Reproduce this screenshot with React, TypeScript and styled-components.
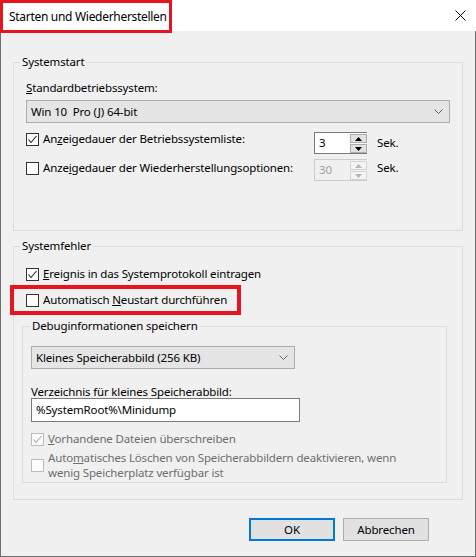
import React from 'react';
import styled, { createGlobalStyle } from 'styled-components';

const GlobalStyle = createGlobalStyle`
  html, body {
    margin: 0;
    padding: 0;
    background: #f0f0f0;
  }
  body {
    font-family: "Noto Sans", "Liberation Sans", sans-serif;
    font-size: 11.5px;
    line-height: 16px;
    letter-spacing: -0.15px;
    color: #000;
  }
  * {
    box-sizing: border-box;
  }
`;

const Window = styled.div`
  width: 476px;
  height: 557px;
  display: flex;
  flex-direction: column;
  background: #f0f0f0;
`;

const TitleBar = styled.div`
  height: 31px;
  flex: 0 0 31px;
  background: #fff;
  display: flex;
  align-items: flex-start;
  justify-content: space-between;
  padding-right: 10px;
  font-size: 12px;
  letter-spacing: -0.3px;
`;

const Highlight = styled.div<{ $width: number; $height: number }>`
  position: relative;
  z-index: 1;
  width: ${(p) => p.$width}px;
  height: ${(p) => p.$height}px;
  border: 3px solid #e5141f;
  display: flex;
  align-items: center;
`;

const TitleText = styled.span`
  padding-left: 6px;
  white-space: nowrap;
`;

const CloseButton = styled.div`
  width: 12px;
  height: 31px;
  display: flex;
  align-items: center;
  justify-content: center;
`;

const Body = styled.div`
  flex: 1;
  border: 1px solid #6e6e6e;
  border-top: none;
  padding: 23px 12px 0 12px;
`;

const Group = styled.fieldset<{ $pt: number; $pb: number; $mt?: number }>`
  margin: ${(p) => p.$mt ?? 0}px 0 0 0;
  min-width: 0;
  border: 1px solid #dcdcdc;
  padding: ${(p) => p.$pt}px 12px ${(p) => p.$pb}px 12px;
`;

const SubGroup = styled(Group)`
  margin: 3px 0 0 -4px;
  width: 425px;
  padding-left: 8px;
  padding-right: 8px;
`;

const Legend = styled.legend<{ $offset: number }>`
  margin-left: ${(p) => p.$offset}px;
  padding: 0 2px;
  line-height: 16px;
`;

const FieldLabel = styled.div`
  white-space: nowrap;
`;

const PathLabel = styled.div`
  margin-top: 16px;
  line-height: 14px;
  white-space: nowrap;
`;

const Combo = styled.div<{ $width?: number; $mt: number }>`
  margin-top: ${(p) => p.$mt}px;
  width: ${(p) => (p.$width ? `${p.$width}px` : '100%')};
  height: 23px;
  background: #e5e5e5;
  border: 1px solid #adadad;
  display: flex;
  align-items: center;
  justify-content: space-between;
  padding: 0 6px 0 4px;
`;

const SpinRow = styled.div<{ $mt: number }>`
  margin-top: ${(p) => p.$mt}px;
  display: flex;
  align-items: flex-start;
  height: 22px;
`;

const SpinLabel = styled.div<{ $shift: number }>`
  flex: 0 0 288px;
  margin-top: ${(p) => p.$shift}px;
`;

const Spin = styled.div<{ $disabled?: boolean }>`
  width: 53px;
  height: 22px;
  display: flex;
  border: 1px solid ${(p) => (p.$disabled ? '#cccccc' : '#7a7a7a')};
  border-right: none;
  background: ${(p) => (p.$disabled ? '#f0f0f0' : '#fff')};
`;

const SpinValue = styled.div<{ $disabled?: boolean }>`
  flex: 1;
  padding-left: 4px;
  line-height: 20px;
  color: ${(p) => (p.$disabled ? '#a0a0a0' : '#000')};
`;

const SpinButtons = styled.div`
  width: 17px;
  display: flex;
  flex-direction: column;
  padding: 1px 0 0 0;
  gap: 1px;
`;

const SpinButton = styled.div<{ $disabled?: boolean }>`
  height: 9px;
  border: 1px solid ${(p) => (p.$disabled ? '#d4d4d4' : '#adadad')};
  background: ${(p) => (p.$disabled ? '#f4f4f4' : '#e1e1e1')};
  display: flex;
  align-items: center;
  justify-content: center;
`;

const Unit = styled.div<{ $shift: number }>`
  margin-left: 10px;
  margin-top: ${(p) => p.$shift}px;
`;

const CheckRow = styled.label<{ $mt?: number; $disabled?: boolean }>`
  margin-top: ${(p) => p.$mt ?? 0}px;
  display: flex;
  align-items: center;
  gap: 4px;
  white-space: nowrap;
  color: ${(p) => (p.$disabled ? '#6d6d6d' : '#000')};
`;

const MultiCheckRow = styled(CheckRow)`
  white-space: normal;
  line-height: 15px;
`;

const Box = styled.span<{ $disabled?: boolean }>`
  flex: 0 0 13px;
  width: 13px;
  height: 13px;
  border: 1px solid ${(p) => (p.$disabled ? '#bcbcbc' : '#333333')};
  background: ${(p) => (p.$disabled ? '#fcfcfc' : '#fff')};
  display: flex;
  align-items: center;
  justify-content: center;
`;

const HighlightRow = styled.div`
  margin: 3px 0 0 -16px;
  width: 231px;
  height: 30px;
  border: 4px solid #e5141f;
  padding-left: 12px;
  display: flex;
  align-items: center;
`;

const PathInput = styled.div`
  margin-top: -1px;
  width: 269px;
  height: 24px;
  background: #fff;
  border: 1px solid #7a7a7a;
  padding-left: 4px;
  line-height: 22px;
`;

const ButtonRow = styled.div`
  margin-top: 18px;
  display: flex;
  justify-content: flex-end;
  gap: 8px;
  padding-right: 34px;
`;

const Button = styled.div<{ $default?: boolean }>`
  width: 86px;
  height: 23px;
  background: #e1e1e1;
  border: ${(p) => (p.$default ? '2px solid #0078d7' : '1px solid #adadad')};
  display: flex;
  align-items: center;
  justify-content: center;
`;

const Chevron = () => (
  <svg width="9" height="6" viewBox="0 0 9 6">
    <polyline points="0.5,0.5 4.5,4.5 8.5,0.5" fill="none" stroke="#606060" strokeWidth="1" />
  </svg>
);

const Tick = ({ color }: { color: string }) => (
  <svg width="11" height="11" viewBox="0 0 11 11">
    <polyline points="1.5,5.5 4,8.5 9.5,2" fill="none" stroke={color} strokeWidth="1.1" />
  </svg>
);

const Arrow = ({ up, color }: { up?: boolean; color: string }) => (
  <svg width="7" height="4" viewBox="0 0 7 4">
    <polygon points={up ? '0,4 7,4 3.5,0' : '0,0 7,0 3.5,4'} fill={color} />
  </svg>
);

const Checkbox = ({ checked, disabled }: { checked?: boolean; disabled?: boolean }) => (
  <Box $disabled={disabled}>{checked && <Tick color={disabled ? '#a8a8a8' : '#222'} />}</Box>
);

const Spinner = ({ value, disabled }: { value: string; disabled?: boolean }) => (
  <Spin $disabled={disabled}>
    <SpinValue $disabled={disabled}>{value}</SpinValue>
    <SpinButtons>
      <SpinButton $disabled={disabled}>
        <Arrow up color={disabled ? '#b5b5b5' : '#000'} />
      </SpinButton>
      <SpinButton $disabled={disabled}>
        <Arrow color={disabled ? '#b5b5b5' : '#000'} />
      </SpinButton>
    </SpinButtons>
  </Spin>
);

export default function App() {
  return (
    <>
      <GlobalStyle />
      <Window>
        <TitleBar>
          <Highlight $width={172} $height={33}>
            <TitleText>Starten und Wiederherstellen</TitleText>
          </Highlight>
          <CloseButton>
            <svg width="11" height="11" viewBox="0 0 11 11">
              <path d="M0.5 0.5 L10.5 10.5 M10.5 0.5 L0.5 10.5" stroke="#000" strokeWidth="1" />
            </svg>
          </CloseButton>
        </TitleBar>
        <Body>
          <Group $pt={10} $pb={49}>
            <Legend $offset={-6}>Systemstart</Legend>
            <FieldLabel>
              <u>S</u>tandardbetriebssystem:
            </FieldLabel>
            <Combo $mt={4}>
              <span>Win 10&nbsp; Pro (J) 64-bit</span>
              <Chevron />
            </Combo>
            <SpinRow $mt={9}>
              <SpinLabel $shift={-1}>
                <CheckRow>
                  <Checkbox checked />
                  <span>
                    An<u>z</u>eigedauer der Betriebssystemliste:
                  </span>
                </CheckRow>
              </SpinLabel>
              <Spinner value="3" />
              <Unit $shift={3}>Sek.</Unit>
            </SpinRow>
            <SpinRow $mt={5}>
              <SpinLabel $shift={1}>
                <CheckRow>
                  <Checkbox />
                  <span>
                    Anze<u>i</u>gedauer der Wiederherstellungsoptionen:
                  </span>
                </CheckRow>
              </SpinLabel>
              <Spinner value="30" disabled />
              <Unit $shift={1}>Sek.</Unit>
            </SpinRow>
          </Group>

          <Group $pt={12} $pb={16} $mt={7}>
            <Legend $offset={-6}>Systemfehler</Legend>
            <CheckRow>
              <Checkbox checked />
              <span>
                <u>E</u>reignis in das Systemprotokoll eintragen
              </span>
            </CheckRow>
            <HighlightRow>
              <CheckRow>
                <Checkbox />
                <span>
                  Automatisch <u>N</u>eustart durchführen
                </span>
              </CheckRow>
            </HighlightRow>
            <SubGroup $pt={12} $pb={2}>
              <Legend $offset={-1}>Debuginformationen speichern</Legend>
              <Combo $mt={0} $width={264}>
                <span>Kleines Speicherabbild (256 KB)</span>
                <Chevron />
              </Combo>
              <PathLabel>Verzeichnis für kleines Speicherabbild:</PathLabel>
              <PathInput>%SystemRoot%\Minidump</PathInput>
              <CheckRow $mt={9} $disabled>
                <Checkbox checked disabled />
                <span>
                  <u>V</u>orhandene Dateien überschreiben
                </span>
              </CheckRow>
              <MultiCheckRow $mt={3} $disabled>
                <Checkbox disabled />
                <span>
                  Auto<u>m</u>atisches Löschen von Speicherabbildern deaktivieren, wenn
                  <br />
                  wenig Speicherplatz verfügbar ist
                </span>
              </MultiCheckRow>
            </SubGroup>
          </Group>

          <ButtonRow>
            <Button $default>OK</Button>
            <Button>Abbrechen</Button>
          </ButtonRow>
        </Body>
      </Window>
    </>
  );
}
